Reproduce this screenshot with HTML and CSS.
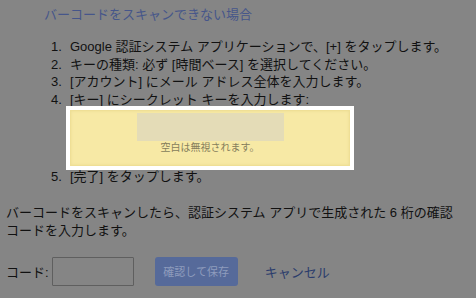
FILE: index.html
```html
<!DOCTYPE html>
<html lang="ja">
<head>
    <meta charset="UTF-8">
    <meta name="viewport" content="width=device-width, initial-scale=1.0">
    <title>認証システム アプリ</title>
    <link rel="stylesheet" href="styles.css">
</head>
<body>

    <!-- Manual setup instructions -->
    <div class="manual">
        <h2 class="manual-title">バーコードをスキャンできない場合</h2>

        <ol class="steps">
            <li>Google 認証システム アプリケーションで、[+] をタップします。</li>
            <li>キーの種類: 必ず [時間ベース] を選択してください。</li>
            <li>[アカウント] にメール アドレス全体を入力します。</li>
            <li>[キー] にシークレット キーを入力します:
                <div class="secret-box">
                    <div class="secret-key"></div>
                    <div class="secret-hint">空白は無視されます。</div>
                </div>
            </li>
            <li>[完了] をタップします。</li>
        </ol>
    </div>

    <p class="verify-text">バーコードをスキャンしたら、認証システム アプリで生成された 6 桁の確認コードを入力します。</p>

    <!-- Verification form -->
    <div class="verify-row">
        <label for="code">コード:</label>
        <input type="text" id="code" class="code-input">
        <button class="save-btn">確認して保存</button>
        <a href="#" class="cancel-link">キャンセル</a>
    </div>

</body>
</html>
```

FILE: styles.css
```css
body {
    margin: 0;
    padding: 0 6px;
    background-color: #858585;
    color: #111;
    font-family: "Liberation Sans", "Noto Sans CJK JP", sans-serif;
    font-size: 13px;
    width: 454px;
}

.manual-title {
    margin: 6px 0 0 38px;
    font-size: 13px;
    font-weight: normal;
    line-height: 18px;
    color: #46568a;
}

.steps {
    list-style: none;
    counter-reset: step;
    margin: 14px 0 0 0;
    padding-left: 45px;
    line-height: 17.5px;
}

.steps li {
    counter-increment: step;
}

.steps li::before {
    content: counter(step) ".";
    display: inline-block;
    width: 19px;
}

.secret-box {
    position: relative;
    z-index: 1;
    width: 278px;
    height: 54px;
    margin: 2px 0 2px 19px;
    background-color: #f7e9a5;
    border: 1px solid #efdf96;
    box-shadow: 0 0 0 4px #fff, inset 0 0 3px #eadb92;
    text-align: center;
}

.secret-key {
    width: 147px;
    height: 28px;
    margin: 2px auto 0;
    background-color: #e4dcb7;
    filter: blur(0.6px);
}

.secret-hint {
    margin-top: 1px;
    font-size: 10px;
    line-height: 12px;
    color: #857d5c;
}

.verify-text {
    margin: 18px 0 0 0;
    line-height: 18px;
}

.verify-row {
    display: flex;
    align-items: center;
    margin-top: 17px;
}

.code-input {
    box-sizing: border-box;
    width: 82px;
    height: 29px;
    margin-left: 3px;
    background-color: #858585;
    border: 1px solid #5f5f5f;
    border-radius: 1px;
}

.save-btn {
    box-sizing: border-box;
    width: 83px;
    height: 29px;
    margin-left: 21px;
    background-color: #566a9a;
    color: #8e9cbd;
    border: none;
    border-radius: 3px;
    font-family: "Liberation Sans", "Noto Sans CJK JP", sans-serif;
    font-size: 11px;
}

.cancel-link {
    margin-left: 27px;
    color: #2b3c6c;
    text-decoration: none;
}
```
